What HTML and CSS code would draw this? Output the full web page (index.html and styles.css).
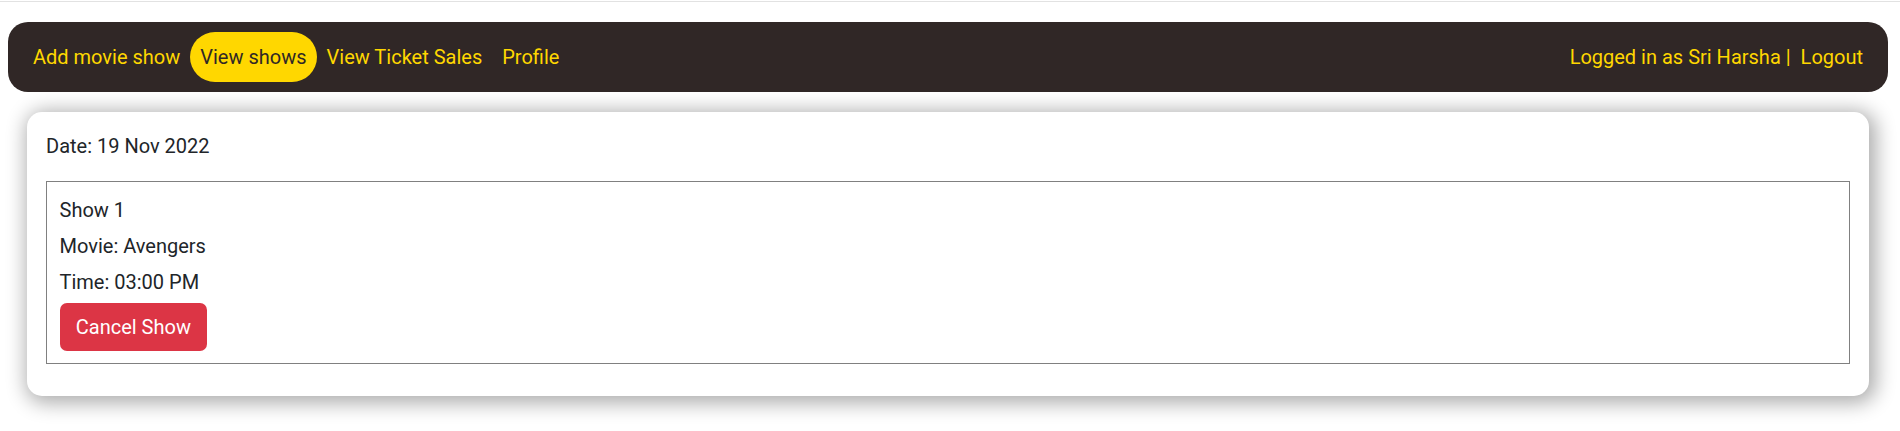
FILE: index.html
```html
<!DOCTYPE html>
<html lang="en">
<head>
<meta charset="utf-8">
<title>View shows</title>
<link rel="stylesheet" href="styles.css">
</head>
<body>
<div class="topline"></div>
<nav class="navbar">
  <div class="nav-left">
    <a class="nav-link" href="#">Add movie show</a>
    <a class="nav-link active" href="#">View shows</a>
    <a class="nav-link" href="#">View Ticket Sales</a>
    <a class="nav-link" href="#">Profile</a>
  </div>
  <div class="nav-right">
    <span class="user">Logged in as Sri Harsha |</span>
    <a class="nav-link" href="#">Logout</a>
  </div>
</nav>
<main class="page">
  <section class="card">
    <p class="date">Date: 19 Nov 2022</p>
    <div class="show">
      <div class="show-line">Show 1</div>
      <div class="show-line">Movie: Avengers</div>
      <div class="show-line">Time: 03:00 PM</div>
      <button class="btn-cancel" type="button">Cancel Show</button>
    </div>
  </section>
</main>
</body>
</html>
```
FILE: styles.css
```css
* { box-sizing: border-box; }
html, body { margin: 0; padding: 0; background: #fff; }
body {
  font-family: Roboto, "Liberation Sans", Arial, sans-serif;
  font-size: 20px;
  line-height: 30px;
  color: #212529;
}
.topline {
  height: 1px;
  margin-top: 1px;
  background: #e2e2e2;
}
.navbar {
  margin: 20px 12px 0 8px;
  height: 70px;
  padding: 10px 15px;
  background: #302726;
  border-radius: 20px;
  display: flex;
  align-items: center;
  justify-content: space-between;
}
.nav-left, .nav-right {
  display: flex;
  align-items: center;
}
.nav-link {
  display: block;
  padding: 10px;
  line-height: 30px;
  color: #ffd700;
  text-decoration: none;
  white-space: nowrap;
}
.nav-link.active {
  background: #ffd700;
  color: #302726;
  border-radius: 25px;
}
.user {
  color: #ffd700;
  white-space: pre;
}
.page {
  padding: 20px 31px 40px 27px;
}
.card {
  background: #fff;
  border-radius: 15px;
  padding: 19px 19px 20px;
  box-shadow: 3px 3px 20px 4px rgba(0, 0, 0, 0.33);
}
.date {
  margin: 0 0 20px;
  line-height: 30px;
}
.show {
  border: 1px solid #808080;
  padding: 12.5px;
  margin-bottom: 12px;
}
.show-line {
  line-height: 30px;
  margin-bottom: 6.25px;
}
.btn-cancel {
  display: block;
  font-family: Roboto, "Liberation Sans", Arial, sans-serif;
  font-size: 20px;
  line-height: 30px;
  padding: 8.75px 16.25px;
  background: #dc3545;
  color: #fff;
  border: none;
  border-radius: 7px;
}
```
